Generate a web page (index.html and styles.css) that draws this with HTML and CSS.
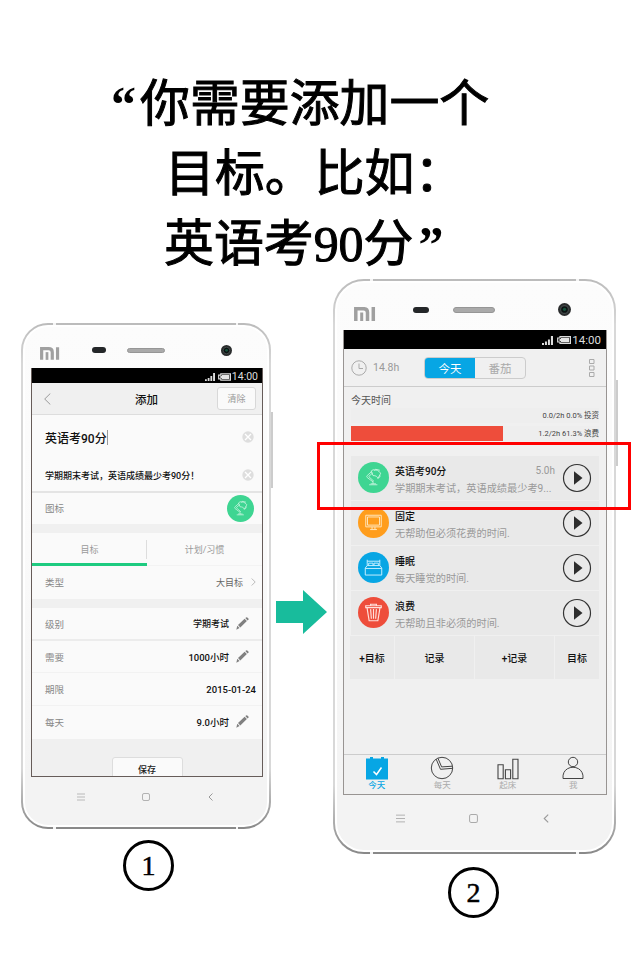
FILE: index.html
```
<!DOCTYPE html>
<html lang="zh-CN">
<head>
<meta charset="utf-8">
<title>添加目标</title>
<link rel="stylesheet" href="styles.css">
</head>
<body>
<svg width="0" height="0" class="defs">
  <defs>
    <symbol id="mi" viewBox="0 0 22 14"><path d="M1.800 14V1.700H9.500Q13.500 1.700 13.500 5.500V14M19.300 0V14" fill="none" stroke="#a0a0a0" stroke-width="3.500"/><path d="M7.700 5.500V14" stroke="#a0a0a0" stroke-width="3"/></symbol>
    <symbol id="camera" viewBox="0 0 12 12"><circle cx="6" cy="6" r="6" fill="#2a2c2d"/><circle cx="6" cy="6" r="3.600" fill="#0b1212" stroke="#454b4b"/><circle cx="6" cy="5.800" r="1.500" fill="#16513b"/></symbol>
    <symbol id="signal" viewBox="0 0 10 8"><path d="M0 6.200h1.800v1.800H0zM2.700 5h1.800v3H2.700zM5.400 3h1.800v5H5.400zM8.100 0h1.900v8H8.100z" fill="#ddd"/></symbol>
    <symbol id="battery" viewBox="0 0 14 8"><path d="M3 .6h10.400v6.800H3V6H.7V2H3z" fill="none" stroke="#ddd" stroke-width="1.200"/><path d="M4 1.800h8.200v4.400H4V5H2.500V3H4z" fill="#e5e5e5"/></symbol>
    <symbol id="lamp" viewBox="0 0 32 32"><circle cx="16" cy="16" r="16" fill="#3ed592"/><g fill="none" stroke="#c9f5e0" stroke-width=".9"><path d="M11.500 23.500h8.500M13 22.500h5.500M15.500 22.500v-2l-6-4.500q-1-1 0-2l5-4.500M16.500 20l-5.500-5 4.500-4M13.500 9.500l2-1.500 4.500.5 3.500 3-3 5.500c-.5-2-2-3-5-3zM17 9l1-1.500 4.500 1M20.500 16.500c2 0 2.500-1.500 2-3"/></g></symbol>
    <symbol id="monitor" viewBox="0 0 32 32"><circle cx="16" cy="16" r="16" fill="#ff9d1c"/><path d="M8 8.500h16v12H8zM9.800 10.300h12.400v8.400H9.800zM14.500 20.500v2.500M17.500 20.500v2.500M12.500 23.300h7" fill="none" stroke="#ffe6bd"/></symbol>
    <symbol id="bed" viewBox="0 0 32 32"><circle cx="16" cy="16" r="16" fill="#07a6e4"/><path d="M9.500 14V8M22.500 14V8M9.500 9.500h13M11 14v-2.500h4.500V14M16.500 14v-2.500H21V14M9.500 14h13l2 2.500v7.300h-17v-7.300zM7.500 17h17" fill="none" stroke="#c9efff"/></symbol>
    <symbol id="trash" viewBox="0 0 32 32"><circle cx="16" cy="16" r="16" fill="#ee4d3b"/><path d="M8 11V9h16v2zM13 9V7.500h6V9M9.300 11l2.200 13.500h9L22.700 11M13 12.500l.8 10M16 12.500v10M19 12.500l-.8 10" fill="none" stroke="#ffe0dc" stroke-width="1.200"/></symbol>
    <symbol id="play" viewBox="0 0 30 30"><circle cx="15" cy="15" r="13.500" fill="none" stroke="#333" stroke-width="1.200"/><path d="M12 8.200 20.500 15 12 21.800z" fill="#2d2d2d"/></symbol>
    <symbol id="clear" viewBox="0 0 12 12"><circle cx="6" cy="6" r="5.700" fill="#dedede"/><path d="m3 3 6 6M9 3 3 9" stroke="#fff" stroke-width="1.300"/></symbol>
    <symbol id="pencil" viewBox="0 0 13 13"><path d="m.3 12.700 1-4 2.300 2.400zM2 8 8.600 1.700l2.300 2.400-6.600 6.300zM9.300 1.100l.8-.7q.6-.5 1.200 0l1.100 1.200q.5.600 0 1.200l-.8.800z" fill="#808080"/></symbol>
  </defs>
</svg>

<h1 class="headline">
  <span class="line line-1"><span class="quote open">“</span>你需要添加一个</span>
  <span class="line line-2">目标。比如：</span>
  <span class="line line-3">英语考90分<span class="quote close">”</span></span>
</h1>

<main class="stage">
  <section class="step step-1">
    <div class="phone phone-small">
      <div class="face">
        <div class="bezel-top">
          <svg class="logo"><use href="#mi"/></svg><i class="sensor"></i><i class="speaker"></i><svg class="camera"><use href="#camera"/></svg>
        </div>
        <div class="screen">
          <div class="status"><svg class="signal"><use href="#signal"/></svg><svg class="battery"><use href="#battery"/></svg><span>14:00</span></div>
          <div class="nav">
            <svg class="back" viewBox="0 0 7 12"><path d="M6.300.5.700 6l5.600 5.500" fill="none" stroke="#999"/></svg>
            <b>添加</b><button class="btn-clear">清除</button>
          </div>
          <div class="field name"><b>英语考90分</b><i class="caret"></i><svg class="x"><use href="#clear"/></svg></div>
          <div class="field note"><b>学期期末考试，英语成绩最少考90分！</b><svg class="x"><use href="#clear"/></svg></div>
          <div class="field icon-row"><span>图标</span><svg class="badge"><use href="#lamp"/></svg></div>
          <div class="gap"></div>
          <div class="tabs"><span class="tab active">目标</span><span class="tab">计划/习惯</span></div>
          <div class="field type"><span>类型</span><em>大目标</em><svg class="chev" viewBox="0 0 5 8"><path d="m.7.500 3.500 3.500L.7 7.500" fill="none" stroke="#bbb"/></svg></div>
          <div class="gap"></div>
          <div class="field level"><span>级别</span><b>学期考试</b><svg class="pen"><use href="#pencil"/></svg></div>
          <div class="field need"><span>需要</span><b>1000小时</b><svg class="pen"><use href="#pencil"/></svg></div>
          <div class="field due"><span>期限</span><b>2015-01-24</b></div>
          <div class="field daily"><span>每天</span><b>9.0小时</b><svg class="pen"><use href="#pencil"/></svg></div>
          <div class="footer"><button class="save">保存</button></div>
        </div>
        <div class="keys">
          <svg viewBox="0 0 8 8"><path d="M0 1h8M0 4h8M0 7h8" stroke="#aaa" stroke-width=".8"/></svg>
          <svg viewBox="0 0 8 8"><rect x=".5" y=".5" width="7" height="7" rx="1.500" fill="none" stroke="#aaa" stroke-width=".9"/></svg>
          <svg viewBox="0 0 8 8"><path d="M5.500.5 2 4l3.500 3.500" fill="none" stroke="#999"/></svg>
        </div>
      </div>
    </div>
    <div class="number">1</div>
  </section>

  <svg class="arrow" viewBox="0 0 51 44"><path d="M0 11h27V0l24 22-24 22V33H0z" fill="#18bc9c"/></svg>

  <section class="step step-2">
    <div class="phone phone-large">
      <div class="face">
        <div class="bezel-top">
          <svg class="logo"><use href="#mi"/></svg><i class="sensor"></i><i class="speaker"></i><svg class="camera"><use href="#camera"/></svg>
        </div>
        <div class="screen">
          <div class="status"><svg class="signal"><use href="#signal"/></svg><svg class="battery"><use href="#battery"/></svg><span>14:00</span></div>
          <div class="toolbar">
            <svg class="clock" viewBox="0 0 16 16"><circle cx="8" cy="8" r="7.200" fill="none" stroke="#aaa"/><path d="M8 3.500V8.500h4" fill="none" stroke="#aaa"/></svg>
            <span class="hours">14.8h</span>
            <div class="segment"><span class="on">今天</span><span>番茄</span></div>
            <svg class="more" viewBox="0 0 6 20"><path d="M.5 1.500h4.500v4H.5zM.5 8h4.500v4H.5zM.5 14.500h4.500v4H.5z" fill="none" stroke="#aaa"/></svg>
          </div>
          <div class="today">
            <div class="title">今天时间</div>
            <div class="bar"><span>0.0/2h 0.0% 投资</span></div>
            <div class="bar"><i class="fill" style="width:61.3%"></i><span>1.2/2h 61.3% 浪费</span></div>
          </div>
          <div class="cards">
            <div class="card"><svg class="badge"><use href="#lamp"/></svg><div class="text"><div class="top"><b>英语考90分</b><span>5.0h</span></div><p>学期期末考试，英语成绩最少考9...</p></div><svg class="play"><use href="#play"/></svg></div>
            <div class="card"><svg class="badge"><use href="#monitor"/></svg><div class="text"><div class="top"><b>固定</b></div><p>无帮助但必须花费的时间.</p></div><svg class="play"><use href="#play"/></svg></div>
            <div class="card"><svg class="badge"><use href="#bed"/></svg><div class="text"><div class="top"><b>睡眠</b></div><p>每天睡觉的时间.</p></div><svg class="play"><use href="#play"/></svg></div>
            <div class="card"><svg class="badge"><use href="#trash"/></svg><div class="text"><div class="top"><b>浪费</b></div><p>无帮助且非必须的时间.</p></div><svg class="play"><use href="#play"/></svg></div>
          </div>
          <div class="actions"><b>+目标</b><b>记录</b><b>+记录</b><b>目标</b></div>
          <div class="tabbar">
            <div class="item current"><svg viewBox="0 0 24 24"><path d="M1 2.500h4V1h3v1.500h8V1h3v1.500h4V23.500H1z" fill="#07a6e4"/><path d="m8.500 15.500 3 3 5-7" fill="none" stroke="#fff" stroke-width="1.500"/></svg><span>今天</span></div>
            <div class="item"><svg viewBox="0 0 24 24"><g fill="none" stroke="#444"><circle cx="12" cy="12" r="10.700"/><path d="M6.200 3.200 10.500 13.300 22.600 12.300M8 2.300l3.600 8.600 10.900-.7"/></g></svg><span>每天</span></div>
            <div class="item"><svg viewBox="0 0 24 24"><path d="M2 8.700h5.200v14H2zM9.400 13.700h5.200v9H9.400zM16.800 3.200H22v19.500h-5.200z" fill="none" stroke="#444" stroke-width="1.100"/></svg><span>起床</span></div>
            <div class="item"><svg viewBox="0 0 24 24"><g fill="none" stroke="#444"><circle cx="12" cy="6" r="4.700"/><path d="M2 22.500C.5 7.500 23.500 7.500 22 22.500z"/></g></svg><span>我</span></div>
          </div>
        </div>
        <div class="keys">
          <svg viewBox="0 0 8 8"><path d="M0 1h8M0 4h8M0 7h8" stroke="#aaa" stroke-width=".8"/></svg>
          <svg viewBox="0 0 8 8"><rect x=".5" y=".5" width="7" height="7" rx="1.500" fill="none" stroke="#aaa" stroke-width=".9"/></svg>
          <svg viewBox="0 0 8 8"><path d="M5.500.5 2 4l3.500 3.500" fill="none" stroke="#999"/></svg>
        </div>
      </div>
      <div class="highlight"></div>
    </div>
    <div class="number">2</div>
  </section>
</main>
</body>
</html>
```
FILE: styles.css
```
* { box-sizing: border-box; }
body { margin: 0; width: 640px; height: 960px; overflow: hidden; background: #fff; color: #111; font-family: Roboto, "Noto Sans CJK SC", sans-serif; }
svg { display: block; flex: none; }
.defs { position: absolute; }
b { font-weight: 500; }
em, i { font-style: normal; }
p { margin: 0; }
button { font: inherit; padding: 0; }

.headline { margin: 0; height: 279px; padding-top: 70px; font: 400 49.900px/70px "Liberation Serif", "Noto Sans CJK SC", serif; color: #000; -webkit-text-stroke: 1px #000; }
.line { display: block; white-space: nowrap; height: 70px; }
.line-1 { padding-left: 111px; }
.line-2 { padding-left: 165px; }
.line-3 { padding-left: 164px; }
.quote { display: inline-block; font-weight: 700; -webkit-text-stroke: 0; }
.open { width: 29px; }
.close { margin-left: 5px; }

.stage { display: flex; align-items: flex-start; padding-left: 21px; height: 681px; }
.step { display: flex; flex-direction: column; }
.step-1 { width: 250px; padding-top: 44px; }
.step-2 { width: 283px; margin-left: 6px; }
.arrow { width: 51px; height: 44px; margin: 311px 0 0 5px; }

.phone { position: relative; padding: 2px; background: linear-gradient(90deg, transparent 13%, #f5f5f5 13% 14%, transparent 14% 86%, #f5f5f5 86% 87%, transparent 87%), linear-gradient(#bbb, #d8d8d8 8%, #d8d8d8 88%, #888); }
.phone-small { height: 506px; border-radius: 27px; }
.phone-large { height: 575px; border-radius: 31px; }
.phone::after { content: ""; position: absolute; left: 100%; top: 89px; width: 1.500px; height: 76px; background: #ccc; }
.phone-large::after { top: 101px; height: 86px; }
.face { height: 100%; border: 2px solid #fff; border-radius: 25px; background: linear-gradient(#fcfcfc, #fafafa 45%, #f3f3f3 90%); display: flex; flex-direction: column; }
.phone-large .face { border-radius: 29px; }
.bezel-top { display: flex; align-items: center; }
.sensor { background: #242729; border-radius: 4px; }
.speaker { background: #aaa; border: 1px solid #969696; border-radius: 4px; }
.status { display: flex; align-items: center; justify-content: flex-end; background: #000; color: #ddd; }
.screen { overflow: hidden; }
.number { display: flex; align-items: center; justify-content: center; width: 51px; height: 51px; border: 3.500px solid #000; border-radius: 50%; color: #000; font: 28px/1 "Liberation Serif", serif; -webkit-text-stroke: .5px #000; }
.step-1 .number { margin: 11px 0 0 102px; }
.step-2 .number { margin: 13px 0 0 115px; }

.phone-small .bezel-top { height: 41px; padding: 5px 0 0 15px; }
.phone-small .logo { width: 20px; height: 13px; margin-top: 7px; }
.phone-small .sensor { width: 14px; height: 6px; margin-left: 32px; }
.phone-small .speaker { width: 38px; height: 5px; margin-left: 21px; }
.phone-small .camera { width: 11px; height: 11px; margin-left: 56px; }
.phone-small .screen { width: 232px; height: 409px; margin-left: 6px; border: 1px solid #665c59; border-top: 0; background: #fafafa; }
.phone-small .status { height: 15px; padding: 2px 4px 0 0; font-size: 10.500px; line-height: 15px; }
.phone-small .signal { width: 10px; height: 8px; margin-right: 3px; }
.phone-small .battery { width: 13px; height: 8px; margin-right: 1px; }
.nav { display: flex; align-items: center; height: 32px; background: #f0f0f0; border-bottom: 1px solid #ddd; padding: 0 6px 0 12px; font-size: 11.500px; }
.back { width: 7px; height: 12px; margin-right: 84px; }
.btn-clear { width: 39px; height: 23px; margin-left: auto; border: 1px solid #d8d8d8; border-radius: 3px; background: #fafafa; color: #999; font-size: 9px; }
.field { display: flex; align-items: center; padding: 0 6px 0 13px; font-size: 9.500px; color: #888; white-space: nowrap; }
.field b { color: #111; font-size: 9px; }
.field > span + b, .field em { margin-left: auto; }
.field em { color: #666; font-size: 9px; }
.field.name { height: 44px; }
.field.name b { font-size: 12px; }
.caret { width: 1px; height: 15px; background: #999; }
.x { width: 12px; height: 12px; margin-left: auto; margin-right: 2px; }
.note { height: 34px; border-bottom: 2px solid #e4e4e4; }
.icon-row { height: 31px; padding-bottom: 1px; }
.phone-small .badge { width: 27px; height: 27px; margin: 0 2px 0 auto; }
.gap { height: 9px; background: #f0f0f0; }
.tabs { display: flex; height: 33px; font-size: 9px; color: #999; }
.tab { flex: 1; display: flex; align-items: center; justify-content: center; padding-top: 1px; border-bottom: 1px solid #f3f3f3; }
.tab.active { padding-top: 3px; border-bottom: 3px solid #1ecb80; background: linear-gradient(#ddd, #ddd) right 7px / 1px 19px no-repeat; }
.type { height: 33px; padding-bottom: 1px; }
.chev { width: 5px; height: 8px; margin-left: 8px; }
.pen { width: 13px; height: 13px; margin: 0 7px; }
.field.due b { font-size: 9.500px; }
.field.need b, .field.daily b { font-size: 9.500px; }
.level { height: 33px; border-bottom: 2px solid #ececec; }
.need { height: 32px; border-bottom: 1px solid #f2f2f2; }
.due { height: 33px; border-bottom: 1px solid #f2f2f2; }
.daily { height: 33px; padding-bottom: 2px; }
.footer { height: 38px; background: #f0f0f0; padding-top: 18px; }
.save { display: block; width: 71px; height: 25px; margin: 0 auto; border: 1px solid #ddd; border-radius: 3px; background: #fafafa; font-size: 9px; font-weight: 500; color: #222; }
.keys { display: flex; align-items: center; }
.phone-small .keys { height: 40px; padding-left: 52px; gap: 57px; }
.phone-small .keys svg { width: 8px; height: 8px; }

.phone-large .bezel-top { height: 47px; padding: 6px 0 0 17px; }
.phone-large .logo { width: 22px; height: 14px; margin-top: 8px; }
.phone-large .sensor { width: 16px; height: 6px; margin-left: 37px; }
.phone-large .speaker { width: 42px; height: 6px; margin-left: 24px; }
.phone-large .camera { width: 13px; height: 13px; margin-left: 63px; }
.phone-large .screen { display: flex; flex-direction: column; width: 264px; height: 465px; margin-left: 6px; border: 1px solid #989492; border-top: 0; background: #f0f0f0; }
.phone-large .status { height: 19px; padding: 1px 5px 0 0; font-size: 11.500px; line-height: 18px; }
.phone-large .signal { width: 11px; height: 9px; margin-right: 4px; }
.phone-large .battery { width: 14px; height: 8px; margin-right: 1px; }
.toolbar { display: flex; align-items: center; height: 38px; padding: 0 11px 0 7px; border-bottom: 1px solid #ccc; }
.clock { width: 16px; height: 16px; }
.hours { width: 51px; margin-left: 6px; font-size: 10.500px; color: #999; }
.segment { display: flex; width: 102px; height: 22px; border: 1px solid #ccc; border-radius: 4px; overflow: hidden; font-size: 11.500px; color: #aaa; }
.segment span { flex: 1; display: flex; align-items: center; justify-content: center; }
.segment .on { background: #07a6e4; color: #fff; }
.more { width: 6px; height: 20px; margin-left: auto; }
.today { padding: 5px 7px 0; }
.title { height: 16px; font-size: 10px; line-height: 17px; color: #555; }
.bar { display: flex; align-items: center; justify-content: flex-end; height: 15px; margin-bottom: 3px; background: #eee; font-size: 7.500px; color: #444; white-space: nowrap; }
.bar span { padding-bottom: 2px; }
.fill { height: 100%; margin-right: auto; background: #ee4d3b; }
.cards { display: grid; grid-auto-rows: 43.500px; gap: 1.500px; padding: 12px 7px 0; }
.card { display: flex; align-items: center; padding: 0 7px; background: #e9e9e9; }
.card .badge { width: 31px; height: 31px; }
.text { width: 160px; margin-left: 6px; padding-top: 4px; }
.top { display: flex; align-items: center; justify-content: space-between; height: 18px; font-size: 10px; }
.top span { color: #999; font-size: 10px; }
.text p { height: 18px; line-height: 18px; font-size: 10.200px; color: #999; white-space: nowrap; }
.card .play { width: 30px; height: 30px; margin-left: auto; }
.actions { display: grid; grid-template-columns: 44px 79px 79px 44px; gap: 1px; height: 43px; margin: 1px 7px 0 6px; font-size: 10px; }
.actions b { display: flex; align-items: center; justify-content: center; background: #e9e9e9; }
.tabbar { display: flex; height: 40px; margin-top: auto; border-top: 1px solid #ccc; }
.item { flex: 1; display: flex; flex-direction: column; align-items: center; padding-top: 1px; font-size: 8.500px; line-height: 11px; color: #aaa; }
.item svg { width: 24px; height: 24px; }
.current { color: #07a6e4; font-weight: 500; }
.phone-large .keys { height: 46px; padding-left: 59px; gap: 64px; }
.phone-large .keys svg { width: 9px; height: 9px; }
.highlight { position: absolute; left: -16px; top: 163px; width: 314px; height: 68px; border: 3px solid #f00; z-index: 2; }
```
